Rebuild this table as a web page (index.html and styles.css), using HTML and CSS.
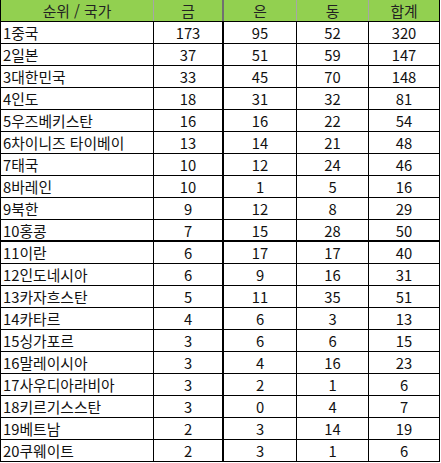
FILE: index.html
```html
<!DOCTYPE html>
<html lang="ko">
<head>
<meta charset="utf-8">
<link rel="stylesheet" href="styles.css">
</head>
<body>
<div class="medals" role="table">
  <div class="row head" role="row">
    <div class="cell">순위 / 국가</div><div class="cell">금</div><div class="cell">은</div><div class="cell">동</div><div class="cell">합계</div>
  </div>
  <div class="row"><div class="cell name">1중국</div><div class="cell">173</div><div class="cell">95</div><div class="cell">52</div><div class="cell">320</div></div>
  <div class="row"><div class="cell name">2일본</div><div class="cell">37</div><div class="cell">51</div><div class="cell">59</div><div class="cell">147</div></div>
  <div class="row"><div class="cell name">3대한민국</div><div class="cell">33</div><div class="cell">45</div><div class="cell">70</div><div class="cell">148</div></div>
  <div class="row"><div class="cell name">4인도</div><div class="cell">18</div><div class="cell">31</div><div class="cell">32</div><div class="cell">81</div></div>
  <div class="row"><div class="cell name">5우즈베키스탄</div><div class="cell">16</div><div class="cell">16</div><div class="cell">22</div><div class="cell">54</div></div>
  <div class="row"><div class="cell name">6차이니즈 타이베이</div><div class="cell">13</div><div class="cell">14</div><div class="cell">21</div><div class="cell">48</div></div>
  <div class="row"><div class="cell name">7태국</div><div class="cell">10</div><div class="cell">12</div><div class="cell">24</div><div class="cell">46</div></div>
  <div class="row"><div class="cell name">8바레인</div><div class="cell">10</div><div class="cell">1</div><div class="cell">5</div><div class="cell">16</div></div>
  <div class="row"><div class="cell name">9북한</div><div class="cell">9</div><div class="cell">12</div><div class="cell">8</div><div class="cell">29</div></div>
  <div class="row group-end"><div class="cell name">10홍콩</div><div class="cell">7</div><div class="cell">15</div><div class="cell">28</div><div class="cell">50</div></div>
  <div class="row"><div class="cell name">11이란</div><div class="cell">6</div><div class="cell">17</div><div class="cell">17</div><div class="cell">40</div></div>
  <div class="row"><div class="cell name">12인도네시아</div><div class="cell">6</div><div class="cell">9</div><div class="cell">16</div><div class="cell">31</div></div>
  <div class="row"><div class="cell name">13카자흐스탄</div><div class="cell">5</div><div class="cell">11</div><div class="cell">35</div><div class="cell">51</div></div>
  <div class="row"><div class="cell name">14카타르</div><div class="cell">4</div><div class="cell">6</div><div class="cell">3</div><div class="cell">13</div></div>
  <div class="row"><div class="cell name">15싱가포르</div><div class="cell">3</div><div class="cell">6</div><div class="cell">6</div><div class="cell">15</div></div>
  <div class="row"><div class="cell name">16말레이시아</div><div class="cell">3</div><div class="cell">4</div><div class="cell">16</div><div class="cell">23</div></div>
  <div class="row"><div class="cell name">17사우디아라비아</div><div class="cell">3</div><div class="cell">2</div><div class="cell">1</div><div class="cell">6</div></div>
  <div class="row"><div class="cell name">18키르기스스탄</div><div class="cell">3</div><div class="cell">0</div><div class="cell">4</div><div class="cell">7</div></div>
  <div class="row"><div class="cell name">19베트남</div><div class="cell">2</div><div class="cell">3</div><div class="cell">14</div><div class="cell">19</div></div>
  <div class="row"><div class="cell name">20쿠웨이트</div><div class="cell">2</div><div class="cell">3</div><div class="cell">1</div><div class="cell">6</div></div>
</div>
</body>
</html>
```
FILE: styles.css
```css
html, body {
  margin: 0;
  padding: 0;
  background: #ffffff;
}
.medals {
  width: 440px;
  box-sizing: border-box;
  border-left: 1px solid #000;
  font-family: "Noto Sans CJK KR", "Noto Sans", sans-serif;
  font-size: 14.8px;
  color: #111;
}
.row {
  display: grid;
  grid-template-columns: 153px 70px 73px 72px 71px;
  height: 22px;
  box-sizing: border-box;
  border-bottom: 1px solid #000;
}
.row.group-end {
  border-bottom-width: 2px;
}
.cell {
  box-sizing: border-box;
  border-right: 1px solid #000;
  text-align: center;
  line-height: 21px;
  white-space: nowrap;
  overflow: hidden;
}
.row > .cell:nth-child(2) {
  border-right-width: 2px;
}
.cell.name {
  text-align: left;
  padding-left: 2px;
}
.head {
  background: #92d050;
  color: #222;
}
.head .cell {
  border-right-color: #a6a6a6;
}
.head .cell:nth-child(2) {
  border-right-color: #707070;
}
.head .cell:last-child {
  border-right-color: #000;
}
```
